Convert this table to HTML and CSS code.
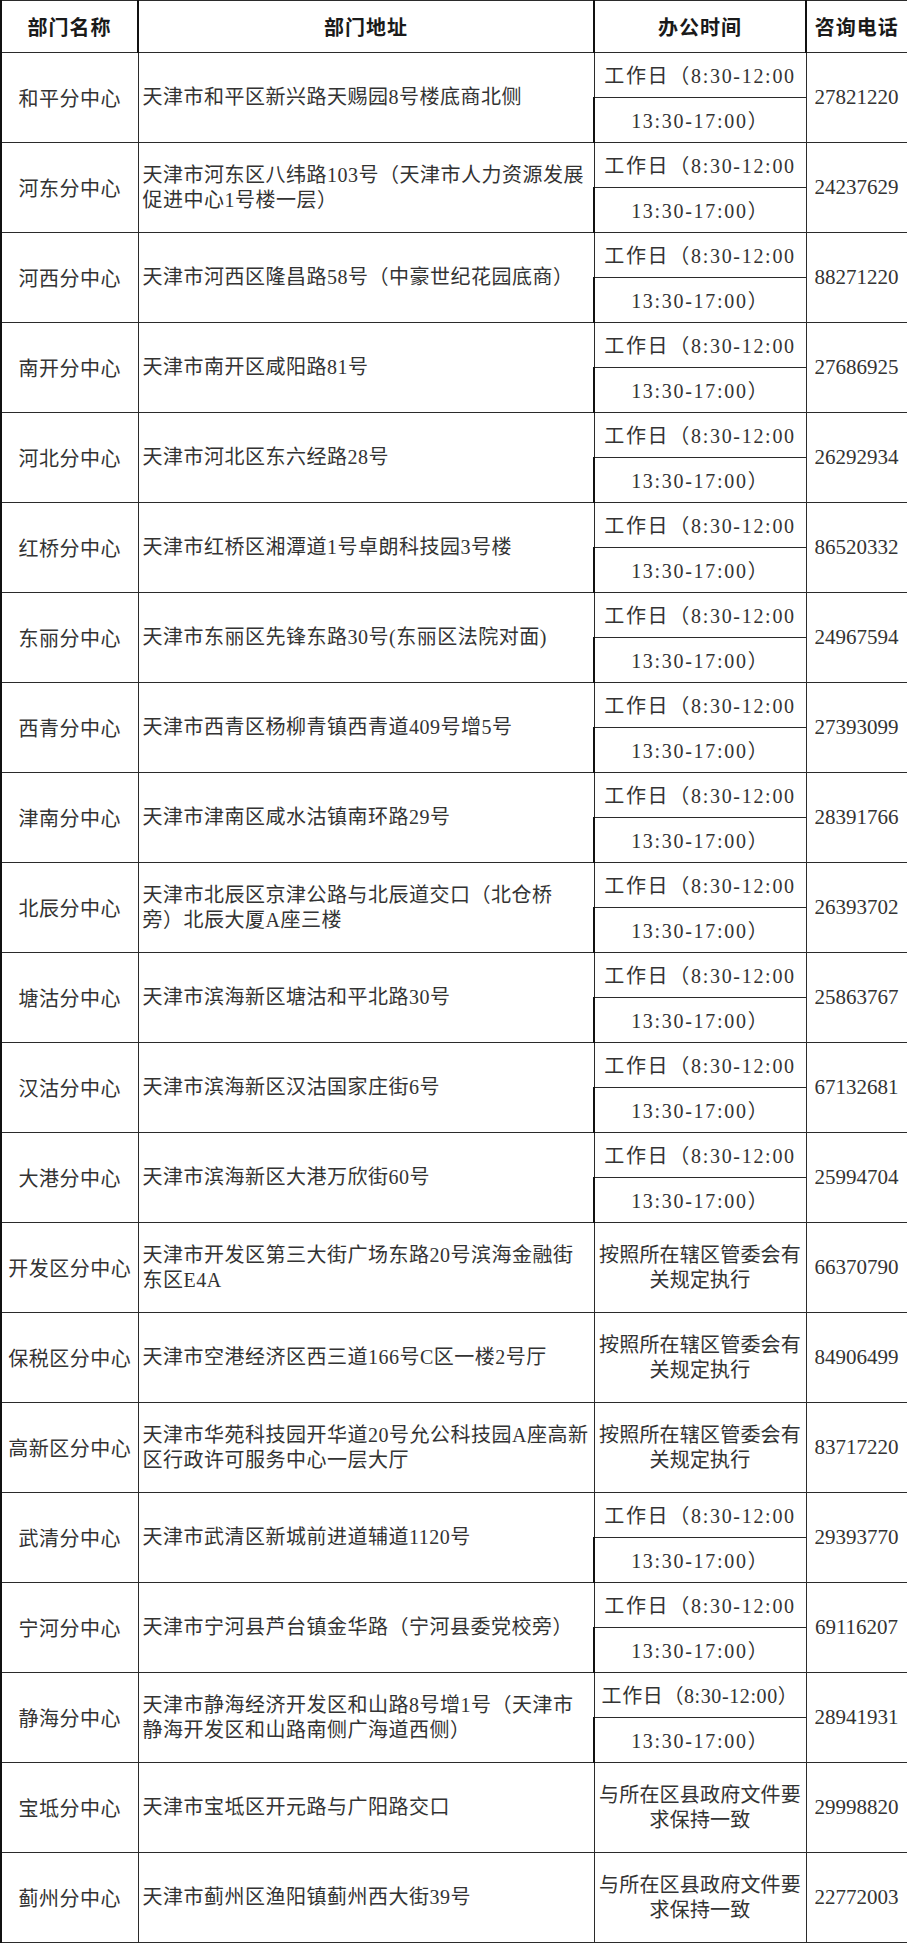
FILE: index.html
```html
<!DOCTYPE html>
<html lang="zh-CN">
<head>
<meta charset="utf-8">
<title>各分中心办公信息</title>
<link rel="stylesheet" href="styles.css">
</head>
<body>
<table class="sheet">
  <colgroup>
    <col class="c-name">
    <col class="c-addr">
    <col class="c-time">
    <col class="c-tel">
  </colgroup>
  <thead>
    <tr class="head">
      <th>部门名称</th>
      <th>部门地址</th>
      <th>办公时间</th>
      <th>咨询电话</th>
    </tr>
  </thead>
  <tbody>
    <tr><td class="name" rowspan="2">和平分中心</td><td class="addr" rowspan="2">天津市和平区新兴路天赐园8号楼底商北侧</td><td class="time">工作日（8:30-12:00</td><td class="tel" rowspan="2">27821220</td></tr>
    <tr><td class="time">13:30-17:00）</td></tr>

    <tr><td class="name" rowspan="2">河东分中心</td><td class="addr" rowspan="2">天津市河东区八纬路103号（天津市人力资源发展<br>促进中心1号楼一层）</td><td class="time">工作日（8:30-12:00</td><td class="tel" rowspan="2">24237629</td></tr>
    <tr><td class="time">13:30-17:00）</td></tr>

    <tr><td class="name" rowspan="2">河西分中心</td><td class="addr" rowspan="2">天津市河西区隆昌路58号（中豪世纪花园底商）</td><td class="time">工作日（8:30-12:00</td><td class="tel" rowspan="2">88271220</td></tr>
    <tr><td class="time">13:30-17:00）</td></tr>

    <tr><td class="name" rowspan="2">南开分中心</td><td class="addr" rowspan="2">天津市南开区咸阳路81号</td><td class="time">工作日（8:30-12:00</td><td class="tel" rowspan="2">27686925</td></tr>
    <tr><td class="time">13:30-17:00）</td></tr>

    <tr><td class="name" rowspan="2">河北分中心</td><td class="addr" rowspan="2">天津市河北区东六经路28号</td><td class="time">工作日（8:30-12:00</td><td class="tel" rowspan="2">26292934</td></tr>
    <tr><td class="time">13:30-17:00）</td></tr>

    <tr><td class="name" rowspan="2">红桥分中心</td><td class="addr" rowspan="2">天津市红桥区湘潭道1号卓朗科技园3号楼</td><td class="time">工作日（8:30-12:00</td><td class="tel" rowspan="2">86520332</td></tr>
    <tr><td class="time">13:30-17:00）</td></tr>

    <tr><td class="name" rowspan="2">东丽分中心</td><td class="addr" rowspan="2">天津市东丽区先锋东路30号(东丽区法院对面)</td><td class="time">工作日（8:30-12:00</td><td class="tel" rowspan="2">24967594</td></tr>
    <tr><td class="time">13:30-17:00）</td></tr>

    <tr><td class="name" rowspan="2">西青分中心</td><td class="addr" rowspan="2">天津市西青区杨柳青镇西青道409号增5号</td><td class="time">工作日（8:30-12:00</td><td class="tel" rowspan="2">27393099</td></tr>
    <tr><td class="time">13:30-17:00）</td></tr>

    <tr><td class="name" rowspan="2">津南分中心</td><td class="addr" rowspan="2">天津市津南区咸水沽镇南环路29号</td><td class="time">工作日（8:30-12:00</td><td class="tel" rowspan="2">28391766</td></tr>
    <tr><td class="time">13:30-17:00）</td></tr>

    <tr><td class="name" rowspan="2">北辰分中心</td><td class="addr" rowspan="2">天津市北辰区京津公路与北辰道交口（北仓桥<br>旁）北辰大厦A座三楼</td><td class="time">工作日（8:30-12:00</td><td class="tel" rowspan="2">26393702</td></tr>
    <tr><td class="time">13:30-17:00）</td></tr>

    <tr><td class="name" rowspan="2">塘沽分中心</td><td class="addr" rowspan="2">天津市滨海新区塘沽和平北路30号</td><td class="time">工作日（8:30-12:00</td><td class="tel" rowspan="2">25863767</td></tr>
    <tr><td class="time">13:30-17:00）</td></tr>

    <tr><td class="name" rowspan="2">汉沽分中心</td><td class="addr" rowspan="2">天津市滨海新区汉沽国家庄街6号</td><td class="time">工作日（8:30-12:00</td><td class="tel" rowspan="2">67132681</td></tr>
    <tr><td class="time">13:30-17:00）</td></tr>

    <tr><td class="name" rowspan="2">大港分中心</td><td class="addr" rowspan="2">天津市滨海新区大港万欣街60号</td><td class="time">工作日（8:30-12:00</td><td class="tel" rowspan="2">25994704</td></tr>
    <tr><td class="time">13:30-17:00）</td></tr>

    <tr><td class="name" rowspan="2">开发区分中心</td><td class="addr" rowspan="2">天津市开发区第三大街广场东路20号滨海金融街<br>东区E4A</td><td class="rule" rowspan="2">按照所在辖区管委会有<br>关规定执行</td><td class="tel" rowspan="2">66370790</td></tr>
    <tr></tr>

    <tr><td class="name" rowspan="2">保税区分中心</td><td class="addr" rowspan="2">天津市空港经济区西三道166号C区一楼2号厅</td><td class="rule" rowspan="2">按照所在辖区管委会有<br>关规定执行</td><td class="tel" rowspan="2">84906499</td></tr>
    <tr></tr>

    <tr><td class="name" rowspan="2">高新区分中心</td><td class="addr" rowspan="2">天津市华苑科技园开华道20号允公科技园A座高新<br>区行政许可服务中心一层大厅</td><td class="rule" rowspan="2">按照所在辖区管委会有<br>关规定执行</td><td class="tel" rowspan="2">83717220</td></tr>
    <tr></tr>

    <tr><td class="name" rowspan="2">武清分中心</td><td class="addr" rowspan="2">天津市武清区新城前进道辅道1120号</td><td class="time">工作日（8:30-12:00</td><td class="tel" rowspan="2">29393770</td></tr>
    <tr><td class="time">13:30-17:00）</td></tr>

    <tr><td class="name" rowspan="2">宁河分中心</td><td class="addr" rowspan="2">天津市宁河县芦台镇金华路（宁河县委党校旁）</td><td class="time">工作日（8:30-12:00</td><td class="tel" rowspan="2">69116207</td></tr>
    <tr><td class="time">13:30-17:00）</td></tr>

    <tr><td class="name" rowspan="2">静海分中心</td><td class="addr" rowspan="2">天津市静海经济开发区和山路8号增1号（天津市<br>静海开发区和山路南侧广海道西侧）</td><td class="time tight">工作日（8:30-12:00）</td><td class="tel" rowspan="2">28941931</td></tr>
    <tr><td class="time">13:30-17:00）</td></tr>

    <tr><td class="name" rowspan="2">宝坻分中心</td><td class="addr" rowspan="2">天津市宝坻区开元路与广阳路交口</td><td class="rule" rowspan="2">与所在区县政府文件要<br>求保持一致</td><td class="tel" rowspan="2">29998820</td></tr>
    <tr></tr>

    <tr><td class="name" rowspan="2">蓟州分中心</td><td class="addr" rowspan="2">天津市蓟州区渔阳镇蓟州西大街39号</td><td class="rule" rowspan="2">与所在区县政府文件要<br>求保持一致</td><td class="tel" rowspan="2">22772003</td></tr>
    <tr></tr>
  </tbody>
</table>
</body>
</html>
```

FILE: styles.css
```css
html, body {
  margin: 0;
  padding: 0;
  background: #ffffff;
}

.sheet {
  border-collapse: collapse;
  table-layout: fixed;
  width: 906px;
  font-family: "Liberation Serif", "Noto Sans CJK SC", serif;
  font-size: 20px;
  color: #333333;
}

.c-name { width: 137px; }
.c-addr { width: 456px; }
.c-time { width: 212px; }
.c-tel  { width: 101px; }

.sheet th,
.sheet td {
  border: 1px solid #2b2b2b;
  padding: 0;
  vertical-align: middle;
  white-space: nowrap;
  overflow: hidden;
}

.sheet tr:first-child th,
.sheet tr td:first-child {
  border-left: 2px solid #111111;
}

.sheet tbody tr {
  height: 45px;
}

.head {
  height: 52px;
}

.head th {
  font-family: "Noto Sans CJK SC", sans-serif;
  font-weight: 700;
  font-size: 20px;
  color: #1a1a1a;
  text-align: center;
  letter-spacing: 1px;
}

.name {
  text-align: center;
  font-family: "Noto Sans CJK SC", sans-serif;
  letter-spacing: 0.5px;
}

.addr {
  text-align: left;
  padding-left: 4px !important;
  line-height: 25px;
  letter-spacing: 0.5px;
}

.time {
  text-align: center;
  line-height: 25px;
  letter-spacing: 1.7px;
  padding-top: 3px !important;
}

.time.tight {
  letter-spacing: 0.6px;
}

.rule {
  text-align: center;
  line-height: 25px;
  letter-spacing: 0.2px;
}

.tel {
  text-align: center;
  font-size: 21px;
}
```
